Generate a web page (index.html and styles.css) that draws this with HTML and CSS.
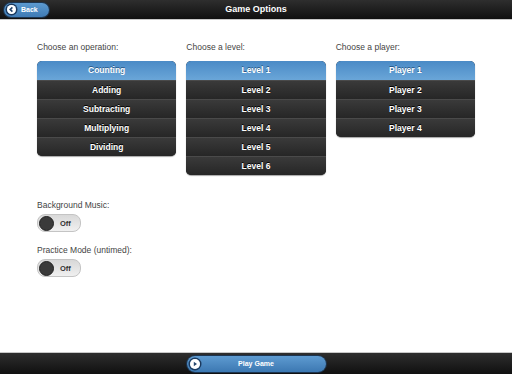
FILE: index.html
```html
<!DOCTYPE html>
<html>
<head>
    <title>Game Options</title>
    <link rel="stylesheet" href="styles.css">
</head>
<body>
    <div class="page">
        <!-- Top bar -->
        <div class="topbar">
            <a class="back">
                <span class="back-icon">
                    <svg width="9" height="9" viewBox="0 0 10 10"><circle cx="5" cy="5" r="5" fill="#fff"/><path d="M6 2.6 L3.6 5 L6 7.4" stroke="#24466e" stroke-width="1.8" fill="none"/></svg>
                </span>
                Back
            </a>
            <h1>Game Options</h1>
        </div>

        <div class="content">
            <div class="columns">
                <div class="column">
                    <div class="label">Choose an operation:</div>
                    <ul class="list">
                        <li class="selected">Counting</li>
                        <li>Adding</li>
                        <li>Subtracting</li>
                        <li>Multiplying</li>
                        <li>Dividing</li>
                    </ul>
                </div>
                <div class="column">
                    <div class="label">Choose a level:</div>
                    <ul class="list">
                        <li class="selected">Level 1</li>
                        <li>Level 2</li>
                        <li>Level 3</li>
                        <li>Level 4</li>
                        <li>Level 5</li>
                        <li>Level 6</li>
                    </ul>
                </div>
                <div class="column">
                    <div class="label">Choose a player:</div>
                    <ul class="list">
                        <li class="selected">Player 1</li>
                        <li>Player 2</li>
                        <li>Player 3</li>
                        <li>Player 4</li>
                    </ul>
                </div>
            </div>

            <div class="option">
                <div class="label">Background Music:</div>
                <div class="toggle"><span class="knob"></span>Off</div>
            </div>
            <div class="option">
                <div class="label">Practice Mode (untimed):</div>
                <div class="toggle"><span class="knob"></span>Off</div>
            </div>
        </div>

        <!-- Bottom bar -->
        <div class="bottombar">
            <a class="play">
                <span class="play-icon">
                    <svg width="10" height="10" viewBox="0 0 10 10"><circle cx="5" cy="5" r="5" fill="#fff"/><path d="M3.8 2.8 L7 5 L3.8 7.2 Z" fill="#24466e"/></svg>
                </span>
                <span class="play-text">Play Game</span>
            </a>
        </div>
    </div>
</body>
</html>
```

FILE: styles.css
```css
/* Main page styles */
html, body, h1, ul {
    margin: 0;
    padding: 0;
}

body {
    font-family: "Liberation Sans", Arial, sans-serif;
    background: #fff;
}

.page {
    width: 512px;
    height: 374px;
    display: flex;
    flex-direction: column;
}

/* Bars */
.topbar {
    height: 19px;
    border-bottom: 1px solid #c8c8c8;
    background: linear-gradient(#2e2e2e, #101010);
    display: flex;
    align-items: center;
    position: relative;
}

.topbar h1 {
    position: absolute;
    left: 0;
    right: 0;
    text-align: center;
    color: #fff;
    font-size: 9px;
    font-weight: bold;
    line-height: 19px;
}

.back {
    position: relative;
    z-index: 1;
    margin-left: 4px;
    width: 45px;
    height: 14px;
    border-radius: 7px;
    background: linear-gradient(#5c9ad0, #3f7bb5);
    box-shadow: 0 0 0 1px #1d3550;
    color: #fff;
    font-size: 7px;
    font-weight: bold;
    display: flex;
    align-items: center;
    gap: 5px;
}

.back-icon {
    display: flex;
    margin-left: 3px;
    width: 9px;
    height: 9px;
    border-radius: 50%;
    box-shadow: 0 0 0 1.5px #1c3a5e;
}

.bottombar {
    margin-top: auto;
    height: 21px;
    border-top: 1px solid #c8c8c8;
    background: linear-gradient(#2e2e2e, #101010);
    display: flex;
    align-items: center;
    justify-content: center;
}

.play {
    width: 139px;
    height: 16px;
    border-radius: 8px;
    background: linear-gradient(#5e9bd1, #3c78b2);
    box-shadow: 0 0 0 1px #1d3550;
    color: #fff;
    font-size: 7px;
    font-weight: bold;
    display: flex;
    align-items: center;
}

.play-icon {
    display: flex;
    margin-left: 3px;
    width: 10px;
    height: 10px;
    border-radius: 50%;
    box-shadow: 0 0 0 1.5px #1c3a5e;
}

.play-text {
    flex: 1;
    text-align: center;
    margin-right: 13px;
}

/* Content */
.content {
    padding: 21px 37px 0;
}

.columns {
    display: flex;
    gap: 10px;
}

.column {
    width: 140px;
}

.label {
    color: #444;
    font-size: 8.5px;
    line-height: 12px;
    margin-bottom: 8px;
}

.list {
    list-style: none;
    border-radius: 5px;
    overflow: hidden;
    background: #222;
    box-shadow: 0 1px 1px rgba(0, 0, 0, 0.35);
}

.list li {
    height: 18px;
    line-height: 18px;
    text-align: center;
    color: #fff;
    font-size: 8.5px;
    font-weight: bold;
    background: linear-gradient(#3a3a3a, #262626);
    border-top: 1px solid #4a4a4a;
    text-shadow: 0 -1px 0 #000;
}

.list li.selected {
    border-top: 0;
    height: 19px;
    line-height: 19px;
    background: linear-gradient(#4a8ac6, #6aa6d8);
    text-shadow: 0 -1px 0 #2b5a88;
}

/* Toggles */
.option {
    margin-top: 24px;
}

.option + .option {
    margin-top: 12px;
}

.option .label {
    margin-bottom: 3px;
}

.toggle {
    width: 42px;
    height: 16px;
    border-radius: 8px;
    background: linear-gradient(#d8d8d8, #f0f0f0);
    border: 1px solid #c4c4c4;
    display: flex;
    align-items: center;
    color: #333;
    font-size: 7.5px;
    font-weight: bold;
    gap: 6px;
}

.knob {
    width: 15px;
    height: 15px;
    margin-left: 1px;
    border-radius: 50%;
    background: #3a3a3a;
    border: 1px solid #222;
    box-sizing: border-box;
}
```
